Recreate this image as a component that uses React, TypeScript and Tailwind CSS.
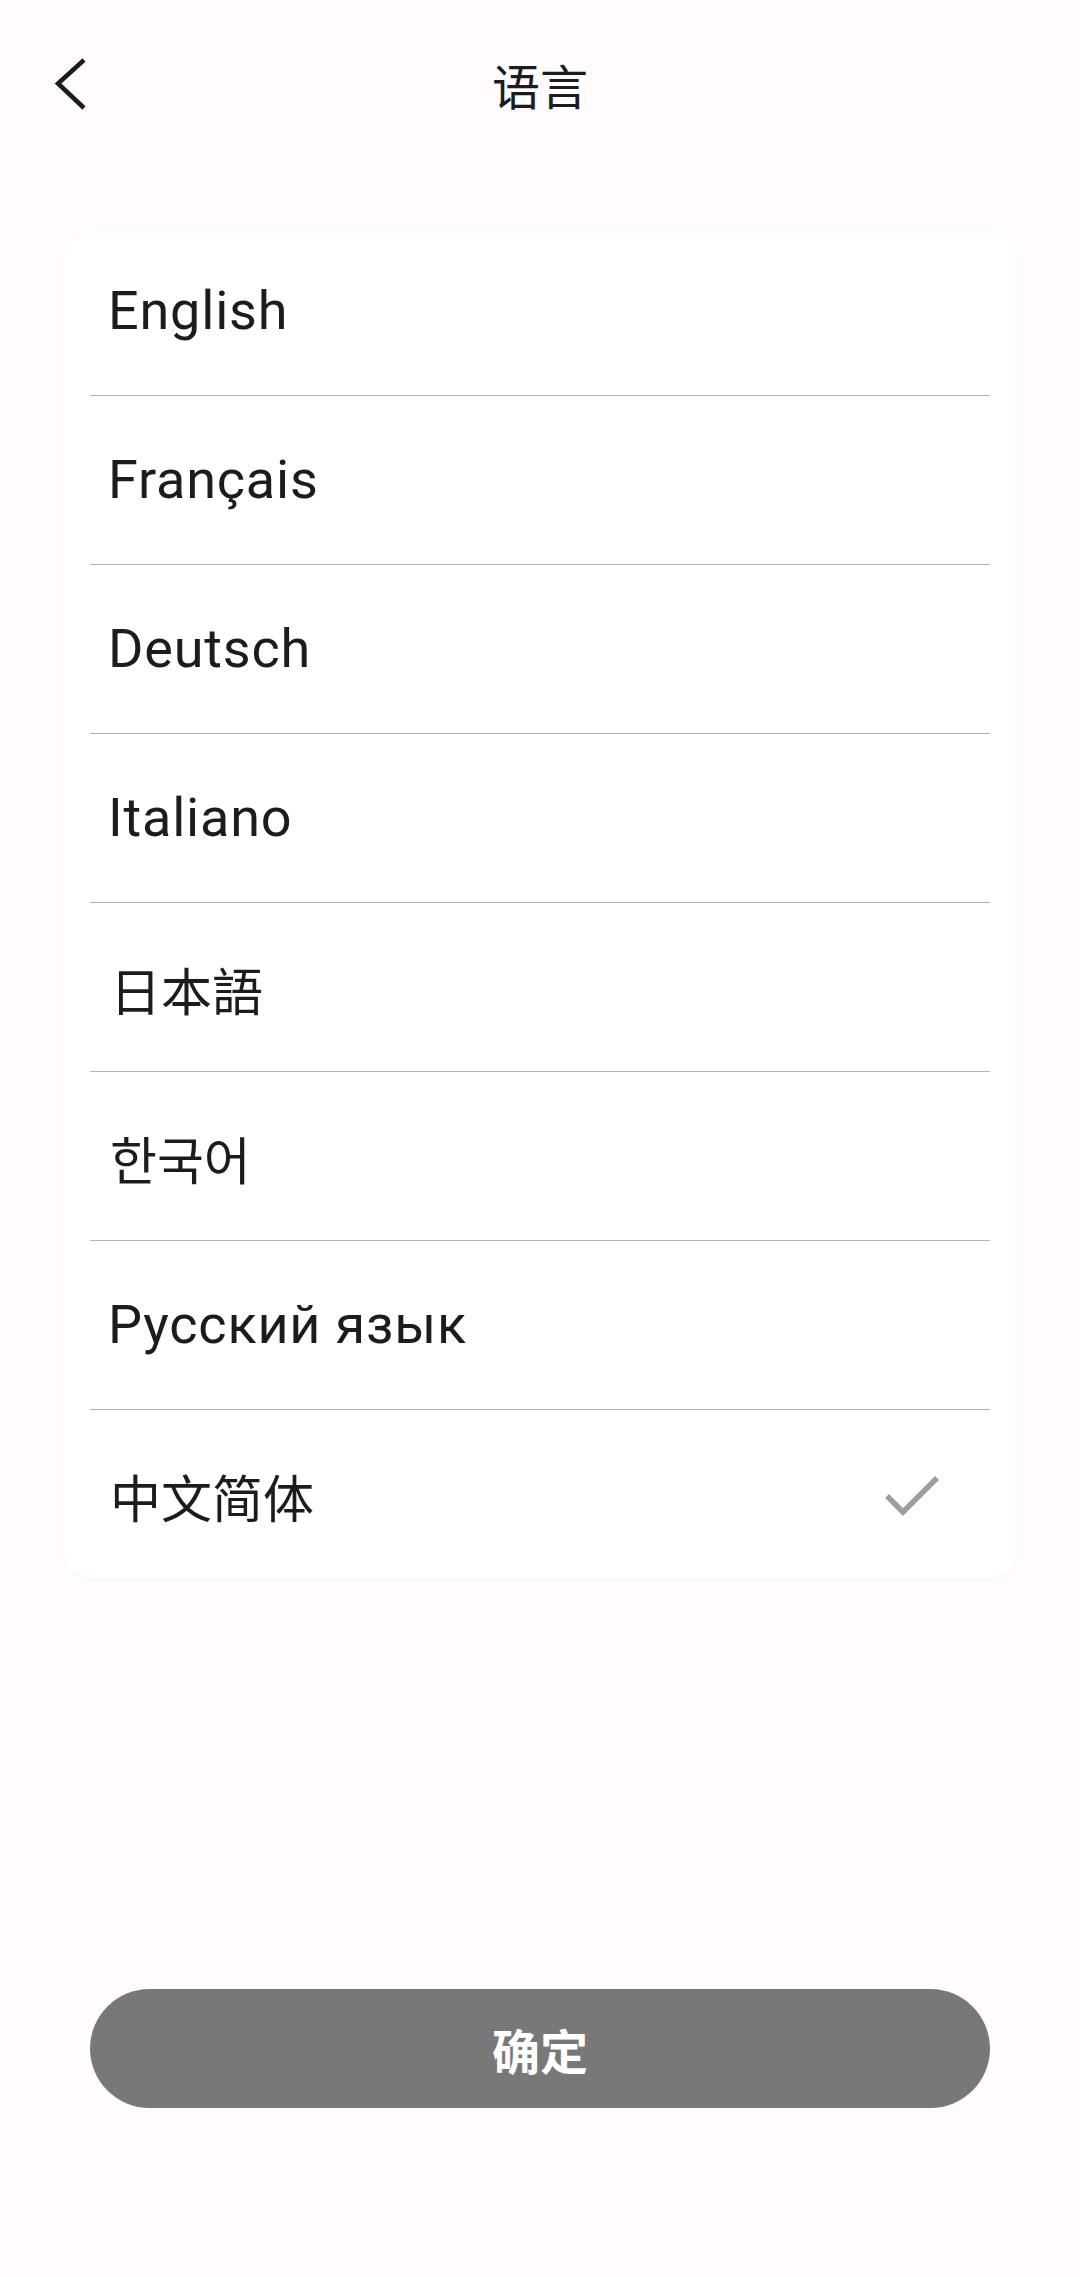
const languages = [
  "English",
  "Français",
  "Deutsch",
  "Italiano",
  "日本語",
  "한국어",
  "Русский язык",
  "中文简体",
];

const selected = "中文简体";

// CJK / Hangul rows render slightly smaller and sit a touch lower
const isCjk = (s: string) => /[\u3040-\u9fff\uac00-\ud7af]/.test(s);

export default function App() {
  return (
    <div
      className="min-h-screen w-full flex flex-col bg-[#fffbfe] text-[#1c1b1f]"
      style={{ fontFamily: 'Roboto, "Noto Sans CJK SC", "Noto Sans CJK KR", sans-serif' }}
    >
      {/* Top bar */}
      <div className="relative h-[168px] flex items-center justify-center">
        <button className="absolute left-[40px] top-[52px] w-[60px] h-[64px] flex items-center justify-center">
          <svg width="40" height="56" viewBox="0 0 40 56" fill="none">
            <path
              d="M34 4 L8 27.5 L34 52"
              stroke="#1c1b1f"
              strokeWidth="4.5"
              strokeLinecap="butt"
              strokeLinejoin="miter"
            />
          </svg>
        </button>
        <h1 className="text-[48px] font-normal leading-none" style={{ fontFamily: '"Noto Sans CJK SC", sans-serif' }}>
          语言
        </h1>
      </div>

      {/* Language list */}
      <div className="mx-[64px] mt-[64px] bg-white rounded-[28px] shadow-[0_1px_3px_rgba(0,0,0,0.04)]">
        {languages.map((lang, i) => (
          <div
            key={lang}
            className={`mx-[26px] flex items-center justify-between pl-[18px] pr-[48px] ${
              i === 0 ? "h-[164px] pb-[6px]" : "h-[169px]"
            } ${i < languages.length - 1 ? "border-b border-[#b4b4b4]" : ""}`}
          >
            {isCjk(lang) ? (
              <span className="text-[51px] leading-none pt-[12px] pl-[2px]">{lang}</span>
            ) : (
              <span className="text-[54px] leading-none tracking-[0.8px]">{lang}</span>
            )}
            {lang === selected && (
              <svg width="60" height="60" viewBox="0 0 60 60" fill="none">
                <path
                  d="M5 31 L21 47 L55 13"
                  stroke="#9e9e9e"
                  strokeWidth="5.5"
                  strokeLinecap="butt"
                  strokeLinejoin="miter"
                />
              </svg>
            )}
          </div>
        ))}
      </div>

      <div className="flex-1" />

      {/* Confirm */}
      <div className="px-[90px] pb-[169px]">
        <button
          className="w-full h-[119px] rounded-full bg-[#787878] text-white text-[48px] font-bold leading-none"
          style={{ fontFamily: '"Noto Sans CJK SC", sans-serif' }}
        >
          确定
        </button>
      </div>
    </div>
  );
}
